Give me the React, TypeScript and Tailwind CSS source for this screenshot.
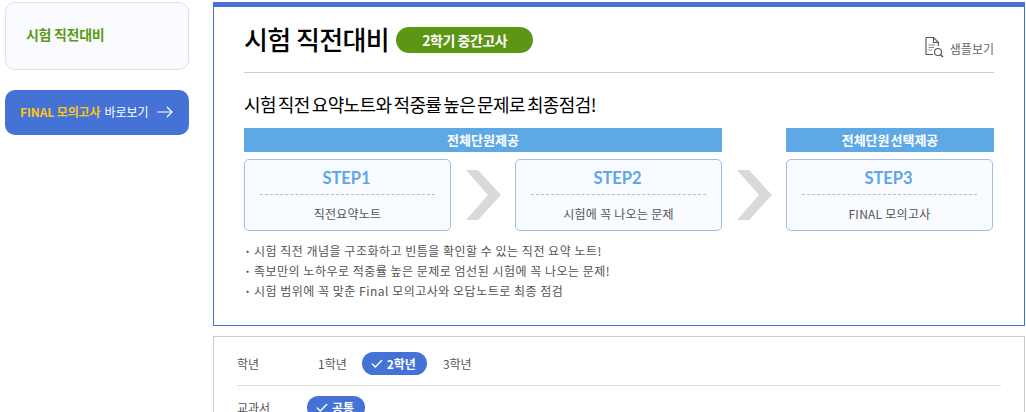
import React from "react";
import { Check } from "lucide-react";

const font = "font-['Noto_Sans_CJK_KR','Noto_Sans',sans-serif]";

const SampleIcon = () => (
  <svg width="19" height="21" viewBox="0 0 19 21" fill="none" stroke="#555" strokeWidth="1.1">
    <path d="M1 0.5H8.5L13.5 5.5V9M1 0.5V17.5H8" />
    <path d="M8.5 0.5V5.5H13.5" />
    <path d="M3.5 8H10M3.5 10.5H9M3.5 13H7" stroke="#888" />
    <circle cx="13" cy="15" r="3.5" />
    <path d="M15.5 17.5L18 20" strokeWidth="1.5" />
  </svg>
);

const Chevron = () => (
  <svg width="36" height="50" viewBox="0 0 36 50" className="shrink-0">
    <path d="M0 0H12L35 25L12 50H0L22 25Z" fill="#d9d9d9" />
  </svg>
);

const Arrow = () => (
  <svg width="16" height="12" viewBox="0 0 16 12" fill="none" stroke="white" strokeWidth="1.2" className="ml-[8px]">
    <path d="M0 6H15M10 1L15 6L10 11" />
  </svg>
);

const StepBox = ({ step, label }: { step: string; label: string }) => (
  <div className="w-[207px] h-[72px] shrink-0 border border-[#a3bdea] rounded-[5px] bg-[#f8fbff] px-[15px] flex flex-col items-center">
    <div className="h-[35px] w-full flex items-center justify-center border-b border-dashed border-[#bbb] font-['Lato',sans-serif] text-[16.5px] font-bold text-[#5fa6e6] pt-[3px] pr-[2px]">
      {step}
    </div>
    <div className="mt-[11px] text-[12px] leading-[16px] text-[#555] tracking-[0.25px]">{label}</div>
  </div>
);

const Bar = ({ className, children }: { className: string; children: React.ReactNode }) => (
  <div className={`h-6 bg-[#5ea8e6] text-white text-[13px] font-bold flex items-center justify-center [word-spacing:-2px] ${className}`}>
    {children}
  </div>
);

const Chip = ({ children }: { children: React.ReactNode }) => (
  <span className="h-[23px] pl-[8px] pr-[11px] rounded-full bg-[#4573d5] text-white text-[12px] font-bold flex items-center gap-[3px]">
    <Check size={14} strokeWidth={2.5} />
    {children}
  </span>
);

export default function App() {
  return (
    <div className={`${font} w-[1026px] h-[412px] overflow-hidden bg-white flex items-start`}>
      {/* sidebar */}
      <div className="w-[184px] ml-[5px] mt-[2px] shrink-0">
        <div className="h-[68px] border border-[#dcdfe8] rounded-[10px] bg-[#fafbff] pl-[20px] flex items-center text-[14px] font-bold text-[#5b9a14] pb-[4px] tracking-[-0.3px]">
          시험 직전대비
        </div>
        <div className="mt-5 h-[45px] rounded-[10px] bg-[#4573d5] pl-[15px] pb-[1px] flex items-center text-[12px]">
          <span className="font-bold text-[#fcc419] tracking-[-0.1px]">FINAL 모의고사</span>
          <span className="ml-1 text-white">바로보기</span>
          <Arrow />
        </div>
      </div>

      {/* main */}
      <div className="ml-6 mt-[2px] w-[812px] shrink-0">
        <div className="h-[324px] border border-[#4573d5] border-t-[5px] px-[30px]">
          <div className="h-[66px] border-b border-[#ccc] flex items-start">
            <h1 className="mt-[14px] text-[26px] leading-[36px] font-medium text-black tracking-[-0.6px]">시험 직전대비</h1>
            <span className="ml-[7px] mt-[20px] w-[137px] h-[26px] rounded-full bg-[#5c9615] text-white text-[14px] font-bold flex items-center justify-center tracking-[-0.5px]">
              2학기 중간고사
            </span>
            <div className="ml-auto mt-[30px] flex items-start gap-[6px] text-[12px] text-[#666]">
              <SampleIcon />
              <span className="mt-[3px]">샘플보기</span>
            </div>
          </div>
          <p className="mt-[18px] text-[18px] leading-[27px] text-black tracking-[-0.6px] [word-spacing:-1.5px]">
            시험 직전 요약노트와 적중률 높은 문제로 최종점검!
          </p>
          <div className="mt-[10px] flex">
            <Bar className="w-[478px]">전체단원제공</Bar>
            <Bar className="w-[208px] ml-16">전체단원 선택제공</Bar>
          </div>
          <div className="mt-[7px] flex items-center">
            <StepBox step="STEP1" label="직전요약노트" />
            <div className="w-16 flex pl-[15px]"><Chevron /></div>
            <StepBox step="STEP2" label="시험에 꼭 나오는 문제" />
            <div className="w-16 flex pl-[15px]"><Chevron /></div>
            <StepBox step="STEP3" label="FINAL 모의고사" />
          </div>
          <ul className="mt-[10px] text-[12px] leading-[20px] text-[#555] tracking-[0.5px]">
            <li className="flex"><span className="w-[10px] font-bold">·</span>시험 직전 개념을 구조화하고 빈틈을 확인할 수 있는 직전 요약 노트!</li>
            <li className="flex"><span className="w-[10px] font-bold">·</span>족보만의 노하우로 적중률 높은 문제로 엄선된 시험에 꼭 나오는 문제!</li>
            <li className="flex"><span className="w-[10px] font-bold">·</span>시험 범위에 꼭 맞춘 Final 모의고사와 오답노트로 최종 점검</li>
          </ul>
        </div>

        <div className="mt-[10px] h-[100px] border border-[#ccc] px-[23px] text-[12px] text-[#555]">
          <div className="h-[49px] border-b border-[#ddd] flex items-center pt-[5px]">
            <span className="w-[81px] mt-[1px]">학년</span>
            <span className="mt-[1px]">1학년</span>
            <span className="ml-[15px]"><Chip>2학년</Chip></span>
            <span className="ml-[16px] mt-[1px]">3학년</span>
          </div>
          <div className="pt-[10px] flex items-start">
            <span className="w-[70px] pt-[3px]">교과서</span>
            <Chip>공통</Chip>
          </div>
        </div>
      </div>
    </div>
  );
}
